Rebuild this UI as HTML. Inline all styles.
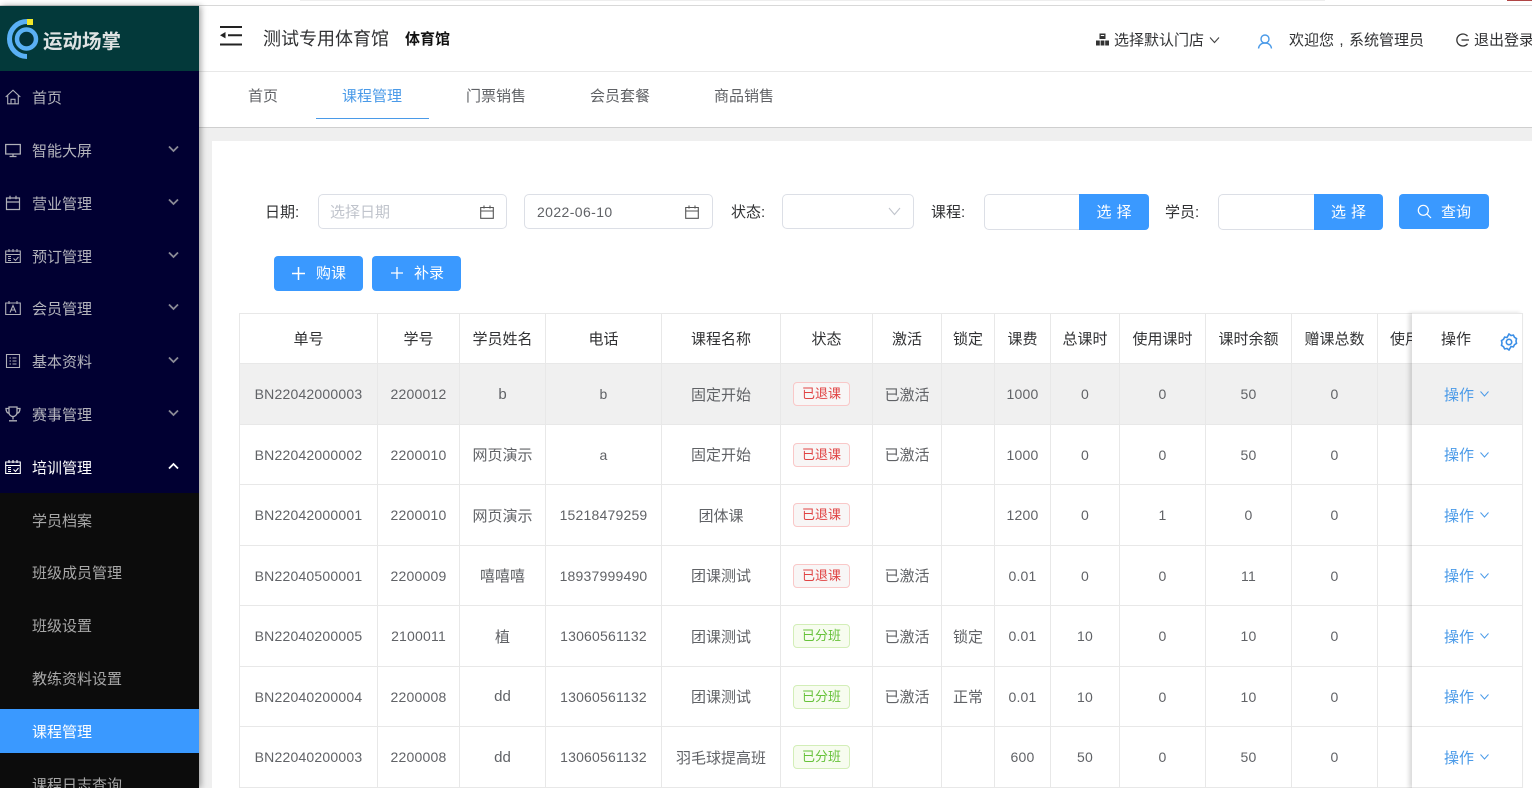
<!DOCTYPE html>
<html lang="zh"><head><meta charset="utf-8"><title>运动场掌</title>
<style>
*{box-sizing:border-box}
html,body{margin:0;padding:0;width:1532px;height:788px;overflow:hidden;background:#fff}
body{position:relative;font-family:"Liberation Sans","Noto Sans CJK SC",sans-serif;font-size:15px;color:#606266}
.a{position:absolute;white-space:nowrap}
.side{left:0;top:6px;width:199px;height:782px;background:#010032;overflow:hidden;box-shadow:2px 0 6px rgba(0,0,0,.35)}
.m{position:absolute;left:0;width:199px;height:44px;line-height:48px;padding-left:32px;color:#b4b4bc;font-size:15px}
.m svg.i{position:absolute;left:5px;top:14px}
.m svg.c{position:absolute;left:168px;top:17px}
.btn{background:#3a99ff;color:#fff;text-align:center;border-radius:4px}
.inp{border:1px solid #dcdfe6;border-radius:5px;background:#fff}
table{border-collapse:collapse;table-layout:fixed;position:absolute;left:0;top:0}
td{border:1px solid #e8e8e8;text-align:center;padding:0;font-size:15px;color:#606266;white-space:nowrap;overflow:hidden}
tr:not(.h) td:nth-child(1),tr:not(.h) td:nth-child(2),tr:not(.h) td:nth-child(4),tr:not(.h) td:nth-child(n+9){font-size:14px;letter-spacing:.2px}
tr.h td{color:#303133}
tr.g td{background:#f0f0f0}
.t{display:inline-block;width:57px;height:24px;line-height:22px;border-radius:4px;font-size:13px;position:relative;left:-5px;letter-spacing:0}
.r{color:#e04444;border:1px solid #f9c8c8;background:#f8f6f6}
.n{color:#67c23a;border:1px solid #d3eeb8;background:#f7fcef}
</style></head><body>

<div class="a" style="left:0;top:5px;width:1532px;height:1px;background:#d8d8d8"></div>
<div class="a" style="left:300px;top:0;width:1025px;height:1px;background:#eee"></div>
<div class="a" style="left:1507px;top:0;width:25px;height:1px;background:#b04545"></div>

<!-- header -->
<div class="a" style="left:199px;top:71px;width:1333px;height:1px;background:#e8e8e8"></div>
<svg class="a" style="left:220px;top:26px" width="22" height="20" viewBox="0 0 22 20"><path d="M0 0h22v2H0zM8 8.200h14v2H8zM0 17.500h22v2H0z" fill="#222"/><path d="M0 9.200l5.500-3.200v6.400z" fill="#222"/></svg>
<div class="a" style="left:263px;top:26px;font-size:18px;line-height:26px;color:#303133">测试专用体育馆</div>
<div class="a" style="left:405px;top:30px;font-size:15px;line-height:20px;color:#111;font-weight:700">体育馆</div>

<svg class="a" style="left:1096px;top:33px" width="13" height="13" viewBox="0 0 13 13"><path d="M3.500 0.500h6v5.500h-6zM0 7.500h3.800v5H0zM4.600 7.500h3.800v5H4.600zM9.200 7.500H13v5H9.200z" fill="#333"/><path d="M4.800 2h3.400v1H4.800z" fill="#fff"/></svg>
<div class="a" style="left:1114px;top:31px;line-height:20px;color:#303133">选择默认门店</div>
<svg class="a" style="left:1209px;top:36px" width="11" height="8" viewBox="0 0 11 8"><path d="M1 1.500l4.500 5 4.500-5" fill="none" stroke="#444" stroke-width="1.100"/></svg>
<svg class="a" style="left:1257px;top:34px" width="16" height="15" viewBox="0 0 16 15"><circle cx="8" cy="5" r="4" fill="none" stroke="#4a9ae8" stroke-width="1.400"/><path d="M1.500 14.500c.5-3.500 3-5.500 6.500-5.500s6 2 6.500 5.500" fill="none" stroke="#4a9ae8" stroke-width="1.400"/></svg>
<div class="a" style="left:1289px;top:31px;line-height:20px;color:#303133">欢迎您<span style="display:inline-block;width:15px;text-align:center">,</span>系统管理员</div>
<svg class="a" style="left:1455px;top:33px" width="15" height="14" viewBox="0 0 15 14"><path d="M12.500 3.200A6 6 0 1 0 12.500 10.800" fill="none" stroke="#333" stroke-width="1.300"/><path d="M6.500 7h7.500" stroke="#333" stroke-width="1.300"/></svg>
<div class="a" style="left:1474px;top:31px;line-height:20px;color:#303133">退出登录</div>

<!-- tabs -->
<div class="a" style="left:248px;top:87px;line-height:20px;color:#606266">首页</div>
<div class="a" style="left:342px;top:87px;line-height:20px;color:#4a9ae8">课程管理</div>
<div class="a" style="left:316px;top:118px;width:113px;height:1px;background:#4a9ae8"></div>
<div class="a" style="left:466px;top:87px;line-height:20px;color:#606266">门票销售</div>
<div class="a" style="left:590px;top:87px;line-height:20px;color:#606266">会员套餐</div>
<div class="a" style="left:714px;top:87px;line-height:20px;color:#606266">商品销售</div>
<div class="a" style="left:199px;top:127px;width:1333px;height:1px;background:#cfcfcf"></div>
<div class="a" style="left:199px;top:128px;width:1333px;height:13px;background:#efefef"></div>
<div class="a" style="left:199px;top:128px;width:13px;height:660px;background:#efefef"></div>

<!-- filters -->
<div class="a" style="left:265px;top:203px;line-height:20px;color:#303133">日期:</div>
<div class="a inp" style="left:318px;top:194px;width:189px;height:35px"></div>
<div class="a" style="left:330px;top:203px;line-height:20px;color:#c0c4cc">选择日期</div>
<svg class="a" style="left:480px;top:205px" width="14" height="14" viewBox="0 0 14 14"><path d="M.700 2.500h12.600v10.800H.700zM.700 6h12.600M4 .5v3M10 .5v3" fill="none" stroke="#555" stroke-width="1.100"/></svg>
<div class="a inp" style="left:524px;top:194px;width:189px;height:35px"></div>
<div class="a" style="left:537px;top:202px;line-height:20px;color:#606266;letter-spacing:.4px;font-size:14px">2022-06-10</div>
<svg class="a" style="left:685px;top:205px" width="14" height="14" viewBox="0 0 14 14"><path d="M.700 2.500h12.600v10.800H.700zM.700 6h12.600M4 .5v3M10 .5v3" fill="none" stroke="#555" stroke-width="1.100"/></svg>
<div class="a" style="left:731px;top:203px;line-height:20px;color:#303133">状态:</div>
<div class="a inp" style="left:782px;top:194px;width:132px;height:35px"></div>
<svg class="a" style="left:888px;top:207px" width="13" height="9" viewBox="0 0 13 9"><path d="M1 1l5.500 6.500L12 1" fill="none" stroke="#c0c4cc" stroke-width="1.100"/></svg>
<div class="a" style="left:931px;top:203px;line-height:20px;color:#303133">课程:</div>
<div class="a inp" style="left:984px;top:194px;width:100px;height:36px"></div>
<div class="a btn" style="left:1079px;top:194px;width:70px;height:36px;line-height:38px;border-radius:0 4px 4px 0;letter-spacing:5px;padding-left:5px">选择</div>
<div class="a" style="left:1165px;top:203px;line-height:20px;color:#303133">学员:</div>
<div class="a inp" style="left:1218px;top:194px;width:100px;height:36px"></div>
<div class="a btn" style="left:1314px;top:194px;width:69px;height:36px;line-height:38px;border-radius:0 4px 4px 0;letter-spacing:5px;padding-left:5px">选择</div>
<div class="a btn" style="left:1399px;top:194px;width:90px;height:35px"></div>
<svg class="a" style="left:1417px;top:204px" width="15" height="15" viewBox="0 0 15 15"><circle cx="6.300" cy="6.300" r="5" fill="none" stroke="#fff" stroke-width="1.200"/><path d="M10 10l4 4" stroke="#fff" stroke-width="1.200"/></svg>
<div class="a" style="left:1441px;top:203px;line-height:20px;color:#fff">查询</div>

<div class="a btn" style="left:274px;top:256px;width:89px;height:35px"></div>
<svg class="a" style="left:292px;top:267px" width="13" height="13" viewBox="0 0 13 13"><path d="M6.500 0v13M0 6.500h13" stroke="#fff" stroke-width="1.500"/></svg>
<div class="a" style="left:316px;top:264px;line-height:20px;color:#fff">购课</div>
<div class="a btn" style="left:372px;top:256px;width:89px;height:35px"></div>
<svg class="a" style="left:391px;top:267px" width="12" height="12" viewBox="0 0 12 12"><path d="M6 0v12M0 6h12" stroke="#fff" stroke-width="1.300"/></svg>
<div class="a" style="left:414px;top:264px;line-height:20px;color:#fff">补录</div>

<!-- table -->
<div class="a" style="left:239px;top:313px;width:1173px;height:475px;overflow:hidden">
<table style="width:1173px">
<colgroup><col style="width:138px"><col style="width:82px"><col style="width:86px"><col style="width:116px"><col style="width:119px"><col style="width:92px"><col style="width:69px"><col style="width:53px"><col style="width:56px"><col style="width:69px"><col style="width:86px"><col style="width:86px"><col style="width:86px"><col style="width:35px"></colgroup>
<tr class="h" style="height:50px"><td>单号</td><td>学号</td><td>学员姓名</td><td>电话</td><td>课程名称</td><td>状态</td><td>激活</td><td>锁定</td><td>课费</td><td>总课时</td><td>使用课时</td><td>课时余额</td><td>赠课总数</td><td style="text-align:left;padding-left:12px">使用</td></tr>
<tr class="g" style="height:61px"><td>BN22042000003</td><td>2200012</td><td>b</td><td>b</td><td>固定开始</td><td><span class="t r">已退课</span></td><td>已激活</td><td></td><td>1000</td><td>0</td><td>0</td><td>50</td><td>0</td><td></td></tr>
<tr style="height:60px"><td>BN22042000002</td><td>2200010</td><td>网页演示</td><td>a</td><td>固定开始</td><td><span class="t r">已退课</span></td><td>已激活</td><td></td><td>1000</td><td>0</td><td>0</td><td>50</td><td>0</td><td></td></tr>
<tr style="height:61px"><td>BN22042000001</td><td>2200010</td><td>网页演示</td><td>15218479259</td><td>团体课</td><td><span class="t r">已退课</span></td><td></td><td></td><td>1200</td><td>0</td><td>1</td><td>0</td><td>0</td><td></td></tr>
<tr style="height:60px"><td>BN22040500001</td><td>2200009</td><td>嘻嘻嘻</td><td>18937999490</td><td>团课测试</td><td><span class="t r">已退课</span></td><td>已激活</td><td></td><td>0.01</td><td>0</td><td>0</td><td>11</td><td>0</td><td></td></tr>
<tr style="height:61px"><td>BN22040200005</td><td>2100011</td><td>植</td><td>13060561132</td><td>团课测试</td><td><span class="t n">已分班</span></td><td>已激活</td><td>锁定</td><td>0.01</td><td>10</td><td>0</td><td>10</td><td>0</td><td></td></tr>
<tr style="height:60px"><td>BN22040200004</td><td>2200008</td><td>dd</td><td>13060561132</td><td>团课测试</td><td><span class="t n">已分班</span></td><td>已激活</td><td>正常</td><td>0.01</td><td>10</td><td>0</td><td>10</td><td>0</td><td></td></tr>
<tr style="height:61px"><td>BN22040200003</td><td>2200008</td><td>dd</td><td>13060561132</td><td>羽毛球提高班</td><td><span class="t n">已分班</span></td><td></td><td></td><td>600</td><td>50</td><td>0</td><td>50</td><td>0</td><td></td></tr>
</table></div>

<!-- fixed column -->
<div class="a" style="left:1412px;top:313px;width:111px;height:475px;background:#fff;border-right:1px solid #e8e8e8;border-top:1px solid #e8e8e8;box-shadow:-3px 0 4px rgba(0,0,0,.15)"></div>
<div class="a" style="left:1412px;top:363px;width:110px;height:61px;background:#f0f0f0"></div>
<div class="a" style="left:1412px;top:363px;width:111px;height:1px;background:#e8e8e8"></div>
<div class="a" style="left:1412px;top:424px;width:111px;height:1px;background:#e8e8e8"></div>
<div class="a" style="left:1412px;top:484px;width:111px;height:1px;background:#e8e8e8"></div>
<div class="a" style="left:1412px;top:545px;width:111px;height:1px;background:#e8e8e8"></div>
<div class="a" style="left:1412px;top:605px;width:111px;height:1px;background:#e8e8e8"></div>
<div class="a" style="left:1412px;top:666px;width:111px;height:1px;background:#e8e8e8"></div>
<div class="a" style="left:1412px;top:726px;width:111px;height:1px;background:#e8e8e8"></div>
<div class="a" style="left:1412px;top:787px;width:111px;height:1px;background:#e8e8e8"></div>
<div class="a" style="left:1441px;top:330px;line-height:20px;color:#303133">操作</div>
<svg class="a" style="left:1500px;top:333px" width="18" height="18" viewBox="0 0 18 18"><path d="M9 1l2 1.500 2.400-.4 1.100 2.200 2 1.300-.5 2.400.5 2.400-2 1.300-1.100 2.200-2.400-.4L9 17l-2-1.500-2.400.4-1.100-2.200-2-1.300.5-2.400-.5-2.400 2-1.300 1.100-2.200 2.400.4z" fill="none" stroke="#3a8ee6" stroke-width="1.600"/><circle cx="9" cy="9" r="2.700" fill="none" stroke="#3a8ee6" stroke-width="1.600"/></svg>

<div class="a" style="left:1444px;top:386px;line-height:20px;color:#4a9ae8">操作</div><svg class="a" style="left:1480px;top:391px" width="9" height="6" viewBox="0 0 9 6"><path d="M.5.500l4 4.500 4-4.500" fill="none" stroke="#4a9ae8"/></svg>
<div class="a" style="left:1444px;top:446px;line-height:20px;color:#4a9ae8">操作</div><svg class="a" style="left:1480px;top:452px" width="9" height="6" viewBox="0 0 9 6"><path d="M.5.500l4 4.500 4-4.500" fill="none" stroke="#4a9ae8"/></svg>
<div class="a" style="left:1444px;top:507px;line-height:20px;color:#4a9ae8">操作</div><svg class="a" style="left:1480px;top:512px" width="9" height="6" viewBox="0 0 9 6"><path d="M.5.500l4 4.500 4-4.500" fill="none" stroke="#4a9ae8"/></svg>
<div class="a" style="left:1444px;top:567px;line-height:20px;color:#4a9ae8">操作</div><svg class="a" style="left:1480px;top:573px" width="9" height="6" viewBox="0 0 9 6"><path d="M.5.500l4 4.500 4-4.500" fill="none" stroke="#4a9ae8"/></svg>
<div class="a" style="left:1444px;top:628px;line-height:20px;color:#4a9ae8">操作</div><svg class="a" style="left:1480px;top:633px" width="9" height="6" viewBox="0 0 9 6"><path d="M.5.500l4 4.500 4-4.500" fill="none" stroke="#4a9ae8"/></svg>
<div class="a" style="left:1444px;top:688px;line-height:20px;color:#4a9ae8">操作</div><svg class="a" style="left:1480px;top:694px" width="9" height="6" viewBox="0 0 9 6"><path d="M.5.500l4 4.500 4-4.500" fill="none" stroke="#4a9ae8"/></svg>
<div class="a" style="left:1444px;top:749px;line-height:20px;color:#4a9ae8">操作</div><svg class="a" style="left:1480px;top:754px" width="9" height="6" viewBox="0 0 9 6"><path d="M.5.500l4 4.500 4-4.500" fill="none" stroke="#4a9ae8"/></svg>

<!-- sidebar -->
<div class="a side">
 <div class="a" style="left:0;top:0;width:199px;height:65px;background:#03393a"></div>
 <svg class="a" style="left:0;top:-6px" width="40" height="71" viewBox="0 0 40 71">
  <path d="M27 21.500A17.500 17.500 0 1 0 27 56.500" fill="none" stroke="#5ab0f5" stroke-width="5"/>
  <circle cx="26.500" cy="39" r="9.500" fill="#03333a" stroke="#5ab0f5" stroke-width="4.500"/>
  <rect x="27" y="19" width="6" height="6" fill="#f2e92a"/>
 </svg>
 <div class="a" style="left:43px;top:24px;line-height:24px;font-size:19.500px;font-weight:700;color:#dfe3e3">运动场掌</div>

 <div class="a" style="left:0;top:487px;width:199px;height:295px;background:#0c0c0c"></div>
 <div class="a" style="left:0;top:703px;width:199px;height:44px;background:#3a99ff"></div>

 <div class="m" style="top:69px"><svg class="i" width="16" height="16" viewBox="0 0 16 16"><path d="M.700 8L8 1.200 15.300 8M2.700 6.500v8.300h10.600V6.500M6 14.800v-4.500h4v4.500" fill="none" stroke="#b0b0b8" stroke-width="1.100"/></svg>首页</div>
 <div class="m" style="top:122px"><svg class="i" width="16" height="16" viewBox="0 0 16 16"><path d="M.700 2.500h14.600v9.500H.700zM8 12v2.500M4.500 14.500h7" fill="none" stroke="#b0b0b8" stroke-width="1.300"/></svg>智能大屏<svg class="c" width="11" height="8" viewBox="0 0 11 8"><path d="M1 1.500l4.500 4.500L10 1.500" fill="none" stroke="#8a8a96" stroke-width="1.800"/></svg></div>
 <div class="m" style="top:175px"><svg class="i" width="16" height="16" viewBox="0 0 16 16"><path d="M1.500 3h13v11.500h-13zM1.500 7h13M5 .8v3.500M11 .8v3.500" fill="none" stroke="#b0b0b8" stroke-width="1.200"/></svg>营业管理<svg class="c" width="11" height="8" viewBox="0 0 11 8"><path d="M1 1.500l4.500 4.500L10 1.500" fill="none" stroke="#8a8a96" stroke-width="1.800"/></svg></div>
 <div class="m" style="top:228px"><svg class="i" width="16" height="16" viewBox="0 0 16 16"><path d="M.700 3h14.600v11.500H.700zM.700 6.500h14.600M4 1v3M8 1v3M12 1v3M3 8.500h3M3 10.500h3M3 12.500h3M8.500 10.500l2 2 3-3.500" fill="none" stroke="#b0b0b8" stroke-width="1.100"/></svg>预订管理<svg class="c" width="11" height="8" viewBox="0 0 11 8"><path d="M1 1.500l4.500 4.500L10 1.500" fill="none" stroke="#8a8a96" stroke-width="1.800"/></svg></div>
 <div class="m" style="top:280px"><svg class="i" width="16" height="16" viewBox="0 0 16 16"><path d="M.700 3h14.600v11.500H.700zM4 1v3M12 1v3M5 12.500l3-7 3 7M6.200 10h3.600" fill="none" stroke="#b0b0b8" stroke-width="1.100"/></svg>会员管理<svg class="c" width="11" height="8" viewBox="0 0 11 8"><path d="M1 1.500l4.500 4.500L10 1.500" fill="none" stroke="#8a8a96" stroke-width="1.800"/></svg></div>
 <div class="m" style="top:333px"><svg class="i" width="16" height="16" viewBox="0 0 16 16"><path d="M1.500 1.500h13v13h-13zM4.500 5h1.500M7.500 5h4M4.500 8h1.500M7.500 8h4M4.500 11h1.500M7.500 11h4" fill="none" stroke="#b0b0b8" stroke-width="1.100"/></svg>基本资料<svg class="c" width="11" height="8" viewBox="0 0 11 8"><path d="M1 1.500l4.500 4.500L10 1.500" fill="none" stroke="#8a8a96" stroke-width="1.800"/></svg></div>
 <div class="m" style="top:386px"><svg class="i" width="16" height="16" viewBox="0 0 16 16"><path d="M4 1h8v5.500a4 4 0 0 1-8 0zM4 2.500H1c0 3 1 4.500 3.300 5M12 2.500h3c0 3-1 4.500-3.300 5M8 10.500v3M4 14.800h8" fill="none" stroke="#b0b0b8" stroke-width="1.300"/></svg>赛事管理<svg class="c" width="11" height="8" viewBox="0 0 11 8"><path d="M1 1.500l4.500 4.500L10 1.500" fill="none" stroke="#8a8a96" stroke-width="1.800"/></svg></div>
 <div class="m" style="top:439px;color:#fff"><svg class="i" width="16" height="16" viewBox="0 0 16 16"><path d="M.700 3h14.600v11.500H.700zM.700 6.500h14.600M4 1v3M8 1v3M12 1v3M3 8.500h3M3 10.500h3M3 12.500h3M8.500 10.500l2 2 3-3.500" fill="none" stroke="#fff" stroke-width="1.100"/></svg>培训管理<svg class="c" width="11" height="8" viewBox="0 0 11 8"><path d="M1 6.500l4.500-4.500L10 6.500" fill="none" stroke="#fff" stroke-width="1.800"/></svg></div>
 <div class="m" style="top:492px;color:#a8a8a8">学员档案</div>
 <div class="m" style="top:544px;color:#a8a8a8">班级成员管理</div>
 <div class="m" style="top:597px;color:#a8a8a8">班级设置</div>
 <div class="m" style="top:650px;color:#a8a8a8">教练资料设置</div>
 <div class="m" style="top:703px;color:#fff">课程管理</div>
 <div class="m" style="top:756px;color:#a8a8a8">课程日志查询</div>
</div>
</body></html>
